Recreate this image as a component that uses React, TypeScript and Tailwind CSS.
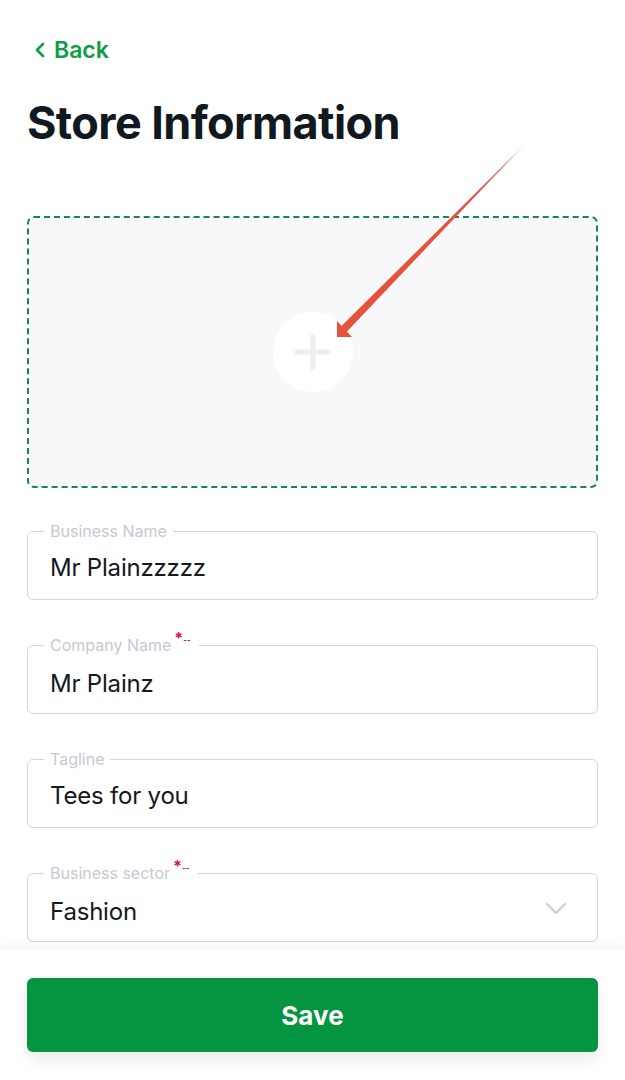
import React from "react";

function Field({ label, value, required, select }: { label: string; value: string; required?: boolean; select?: boolean }) {
  return (
    <fieldset className="relative h-[79px] rounded-[6px] border-[1.5px] border-[#cfd6de] px-[16px] m-0">
      <legend className="ml-0 px-[6px] text-[16px] leading-[20px] text-[#c3cad3] flex items-start">
        <span>{label}</span>
        {required && (
          <span className="relative -top-[7px] ml-[3px] mr-[2px] text-[#e0103a] text-[16px] leading-[20px] font-bold">
            *<span className="text-[8px] align-middle">--</span>
          </span>
        )}
      </legend>
      <div className="flex items-center h-[56px] px-[6px] -mt-[1px]">
        <span className="flex-1 text-[24px] leading-[30px] text-[#15181d] tracking-[-0.2px]">{value}</span>
        {select && (
          <svg width="22" height="14" viewBox="0 0 22 14" className="mr-[8px] -mt-[6px]">
            <path d="M2 2 L11 11 L20 2" fill="none" stroke="#c8cfd9" strokeWidth="2.4" strokeLinecap="round" strokeLinejoin="round" />
          </svg>
        )}
      </div>
    </fieldset>
  );
}

export default function App() {
  return (
    <div className="relative w-[625px] h-[1080px] bg-white overflow-hidden" style={{ fontFamily: "Inter, 'Noto Sans', sans-serif" }}>
      <div className="px-[27px]">
        <div className="pt-[35px] flex items-center gap-[8px] text-[#0f9d48]">
          <svg width="12" height="18" viewBox="0 0 12 18" className="ml-[7px]">
            <path d="M9 3 L3 9 L9 15" fill="none" stroke="#0f9d48" strokeWidth="2.6" strokeLinecap="round" strokeLinejoin="round" />
          </svg>
          <span className="text-[23px] leading-[30px] font-semibold">Back</span>
        </div>
        <h1 className="mt-[30px] text-[45px] leading-[56px] font-bold text-[#101820] tracking-[-0.6px]">Store Information</h1>

        <div className="mt-[65px] h-[272px] rounded-[7px] border-2 border-dashed border-[#12894f] bg-[#f8f8fa] flex items-center justify-center">
          <div className="w-[80px] h-[80px] rounded-full bg-white flex items-center justify-center">
            <svg width="40" height="40" viewBox="0 0 40 40">
              <path d="M20 4 V36 M4 20 H36" stroke="#efeff1" strokeWidth="5" strokeLinecap="round" />
            </svg>
          </div>
        </div>

        <div className="mt-[33px] flex flex-col gap-[35px]">
          <Field label="Business Name" value="Mr Plainzzzzz" />
          <Field label="Company Name" value="Mr Plainz" required />
          <Field label="Tagline" value="Tees for you" />
          <Field label="Business sector" value="Fashion" required select />
        </div>
      </div>

      <div className="absolute left-0 right-0 bottom-0 h-[130px] bg-white shadow-[0_-6px_14px_rgba(0,0,0,0.04)] px-[27px] pt-[28px]">
        <button className="w-full h-[74px] rounded-[6px] bg-[#05943f] text-white text-[26px] font-bold shadow-[0_8px_16px_rgba(0,0,0,0.08)]">
          Save
        </button>
      </div>

      <svg className="absolute left-0 top-0 pointer-events-none" width="625" height="1080" viewBox="0 0 625 1080">
        <polygon points="341.5,326 346.5,332 523,146" fill="#e4523b" />
        <polygon points="337,337 337,321 352,337" fill="#e4523b" />
      </svg>
    </div>
  );
}
